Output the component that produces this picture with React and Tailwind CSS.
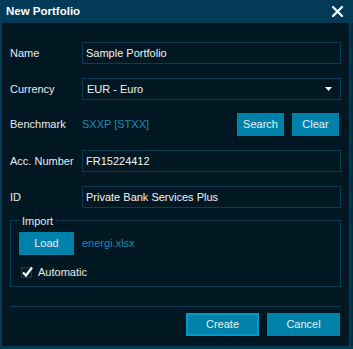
import React from "react";

const Field = ({ label, children, className = "" }) => (
  <div className={`flex items-center ${className}`}>
    <span className="w-[72px] shrink-0 text-[#e6ecef]">{label}</span>
    {children}
  </div>
);

const Input = ({ value }) => (
  <div className="flex-1 h-[22px] border border-[#0c3b52] flex items-center pl-[3px] text-[#f2f4f5]">
    {value}
  </div>
);

const Button = ({ children, className = "" }) => (
  <button
    className={`h-[23px] bg-[#0081a9] text-[#e8f2f6] flex items-center justify-center ${className}`}
  >
    {children}
  </button>
);

export default function App() {
  return (
    <div className="w-[353px] h-[349px] bg-[#033a55] flex flex-col font-['Liberation_Sans',Arial,sans-serif] text-[11px] select-none">
      {/* TITLE BAR */}
      <div className="h-[23px] shrink-0 flex items-center justify-between pl-[6px] pr-[10px]">
        <span className="font-bold text-[11.5px] text-white">New Portfolio</span>
        <svg width="11" height="11" viewBox="0 0 11 11">
          <path d="M1 1L10 10M10 1L1 10" stroke="#fff" strokeWidth="2.2" strokeLinecap="square" />
        </svg>
      </div>

      {/* BODY */}
      <div className="flex-1 flex mb-[3px]">
        <div className="flex-1 ml-[2px] bg-[#011823] px-[8px] pt-[19px] flex flex-col">
          <Field label="Name">
            <Input value="Sample Portfolio" />
          </Field>

          <Field label="Currency" className="mt-[14px]">
            <div className="flex-1 h-[22px] border border-[#0c3b52] flex items-center justify-between pl-[4px] pr-[8px] text-[#f2f4f5]">
              <span className="pt-[1px]">EUR - Euro</span>
              <svg width="7" height="4" viewBox="0 0 7 4">
                <path d="M0 0H7L3.5 4Z" fill="#fff" />
              </svg>
            </div>
          </Field>

          <Field label="Benchmark" className="mt-[13px]">
            <span className="flex-1 text-[#1f8ab3]">SXXP [STXX]</span>
            <div className="flex gap-[8px] mr-[2px]">
              <Button className="w-[47px]">Search</Button>
              <Button className="w-[47px]">Clear</Button>
            </div>
          </Field>

          <Field label="Acc. Number" className="mt-[14px]">
            <Input value="FR15224412" />
          </Field>

          <Field label="ID" className="mt-[14px]">
            <Input value="Private Bank Services Plus" />
          </Field>

          {/* IMPORT GROUP */}
          <div className="relative mt-[12px] h-[67px] border border-[#0c3b52] pl-[8px] pt-[11px]">
            <span className="absolute -top-[8px] left-[9px] px-[2px] bg-[#011823] text-[#e6ecef]">
              Import
            </span>
            <div className="flex items-center">
              <Button className="w-[55px]">Load</Button>
              <span className="ml-[8px] text-[#1f8ab3]">energi.xlsx</span>
            </div>
            <div className="flex items-center mt-[9px] ml-[2px]">
              <div className="relative w-[11px] h-[11px] border border-[#0c3b52] bg-[#02202e]">
                <svg className="absolute -top-[2px] left-[0px]" width="11" height="12" viewBox="0 0 11 12">
                  <path d="M1 6.5L4 9.5L10 1.5" stroke="#fff" strokeWidth="2.2" fill="none" />
                </svg>
              </div>
              <span className="ml-[6px] text-[#e6ecef]">Automatic</span>
            </div>
          </div>

          {/* FOOTER */}
          <div className="mt-[19px] h-px bg-[#0c3b52]" />
          <div className="flex justify-end gap-[8px] mt-[6px] mr-[1px]">
            <Button className="w-[73px] border-2 border-[#0299c9]">Create</Button>
            <Button className="w-[73px]">Cancel</Button>
          </div>
        </div>
        <div className="w-[2px]" />
        <div className="w-[2px] bg-[#022a3e]" />
      </div>
    </div>
  );
}
